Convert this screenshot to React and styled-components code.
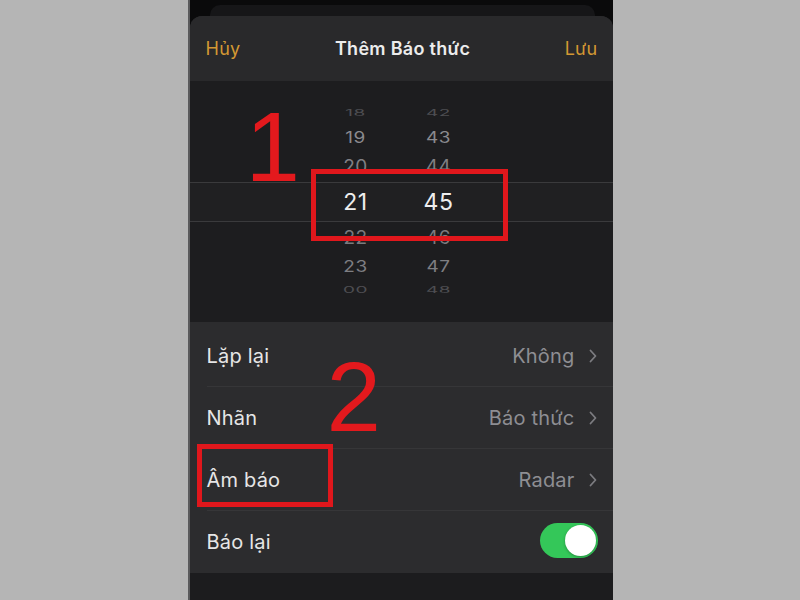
import React from "react";
import styled, { createGlobalStyle } from "styled-components";

const GlobalStyle = createGlobalStyle`
  html, body {
    margin: 0;
    padding: 0;
    background: #b5b5b5;
  }
  body {
    font-family: Inter, "Noto Sans", "Liberation Sans", sans-serif;
  }
`;

const hours = [
  { h: "18", m: "42", size: 22, scale: 0.45, color: "#4e4e52" },
  { h: "19", m: "43", size: 26, scale: 0.8, color: "#8a8a8e" },
  { h: "20", m: "44", size: 32, scale: 0.95, color: "#808084" },
  { h: "21", m: "45", size: 40, scale: 1, color: "#eeeeee", active: true },
  { h: "22", m: "46", size: 31, scale: 0.95, color: "#7a7a7e" },
  { h: "23", m: "47", size: 26, scale: 0.8, color: "#7e7e82" },
  { h: "00", m: "48", size: 22, scale: 0.45, color: "#4e4e52" },
];

const rows = [
  { label: "Lặp lại", value: "Không" },
  { label: "Nhãn", value: "Báo thức" },
  { label: "Âm báo", value: "Radar" },
];

const App = () => {
  return (
    <Page>
      <GlobalStyle />
      <Phone>
        <TopStrip>
          <BackCard />
        </TopStrip>
        <Sheet>
          <Header>
            <HeaderButton>Hủy</HeaderButton>
            <Title>Thêm Báo thức</Title>
            <HeaderButton>Lưu</HeaderButton>
          </Header>
          <Picker>
            {hours.map((r) => (
              <PickerRow key={r.h} $h={r.size} $active={r.active}>
                <span />
                <Num $color={r.color} $scale={r.scale} $active={r.active}>
                  {r.h}
                </Num>
                <span />
                <Num $color={r.color} $scale={r.scale} $active={r.active}>
                  {r.m}
                </Num>
              </PickerRow>
            ))}
          </Picker>
          <List>
            {rows.map((r) => (
              <Row key={r.label}>
                <Label>{r.label}</Label>
                <Value>
                  {r.value}
                  <Chevron viewBox="0 0 8 14">
                    <path
                      d="M1.5 1.5 L6.5 7 L1.5 12.5"
                      fill="none"
                      stroke="#7c7c80"
                      strokeWidth="1.8"
                      strokeLinecap="round"
                      strokeLinejoin="round"
                    />
                  </Chevron>
                </Value>
              </Row>
            ))}
            <Row $last>
              <Label>Báo lại</Label>
              <Toggle>
                <Knob />
              </Toggle>
            </Row>
          </List>
          <Bottom />
        </Sheet>
        <Mark $left={56} $top={89}>1</Mark>
        <Mark $left={137} $top={339}>2</Mark>
        <RedBox $left={121} $top={169} $w={197} $h={72} />
        <RedBox $left={7} $top={444} $w={136} $h={63} />
      </Phone>
    </Page>
  );
};

const Page = styled.div`
  width: 800px;
  height: 600px;
  display: flex;
  justify-content: center;
  overflow: hidden;
`;

const Phone = styled.div`
  position: relative;
  width: 425px;
  height: 600px;
  background: #0a0a0b;
  border-left: 2px solid #5a5a5c;
  box-sizing: border-box;
  display: flex;
  flex-direction: column;
`;

const TopStrip = styled.div`
  height: 16px;
  padding: 5px 18px 0 20px;
  box-sizing: border-box;
  display: flex;
`;

const BackCard = styled.div`
  flex: 1;
  background: #161618;
  border-radius: 10px 10px 0 0;
`;

const Sheet = styled.div`
  flex: 1;
  display: flex;
  flex-direction: column;
  background: #28282a;
  border-radius: 12px 12px 0 0;
  overflow: hidden;
`;

const Header = styled.div`
  height: 65px;
  display: flex;
  align-items: center;
  justify-content: space-between;
  padding: 0 15px 0 16px;
  background: #29292b;
`;

const HeaderButton = styled.span`
  color: #d39833;
  font-size: 18px;
  letter-spacing: 0.3px;
`;

const Title = styled.span`
  color: #ececec;
  font-size: 18px;
  font-weight: 600;
  letter-spacing: 0.3px;
`;

const Picker = styled.div`
  height: 241px;
  padding-top: 21px;
  box-sizing: border-box;
  background: #1d1d1f;
  display: flex;
  flex-direction: column;
`;

const PickerRow = styled.div`
  height: ${(p) => p.$h}px;
  flex-shrink: 0;
  display: grid;
  grid-template-columns: 134px 64px 19px 64px;
  align-items: center;
  box-sizing: border-box;
  ${(p) =>
    p.$active &&
    `
    border-top: 1px solid #3a3a3c;
    border-bottom: 1px solid #3a3a3c;
    background: #202022;
  `}
`;

const Num = styled.span`
  text-align: center;
  color: ${(p) => p.$color};
  font-size: ${(p) => (p.$active ? 23 : 19)}px;
  font-weight: 400;
  transform: scaleY(${(p) => p.$scale});
  letter-spacing: 0.5px;
`;

const List = styled.div`
  background: #2c2c2e;
  padding-top: 3px;
`;

const Row = styled.div`
  height: 62px;
  margin-left: 17px;
  padding-right: 16px;
  display: flex;
  align-items: center;
  justify-content: space-between;
  box-sizing: border-box;
  border-bottom: ${(p) => (p.$last ? "none" : "1px solid #363638")};
`;

const Label = styled.span`
  color: #e6e6e6;
  font-size: 20px;
  letter-spacing: 0.2px;
`;

const Value = styled.span`
  display: flex;
  align-items: center;
  gap: 14px;
  color: #8e8e93;
  font-size: 20px;
  letter-spacing: 0.2px;
`;

const Chevron = styled.svg`
  width: 8px;
  height: 14px;
`;

const Toggle = styled.div`
  width: 58px;
  height: 35px;
  border-radius: 18px;
  background: #34c759;
  display: flex;
  align-items: center;
  justify-content: flex-end;
  padding: 2px;
  box-sizing: border-box;
  margin-right: -1px;
  margin-top: -4px;
`;

const Knob = styled.div`
  width: 31px;
  height: 31px;
  border-radius: 50%;
  background: #ffffff;
  box-shadow: 0 1px 3px rgba(0, 0, 0, 0.3);
`;

const Bottom = styled.div`
  flex: 1;
  background: #1c1c1e;
`;

const Mark = styled.span`
  position: absolute;
  left: ${(p) => p.$left}px;
  top: ${(p) => p.$top}px;
  font-family: "Liberation Sans", Arial, sans-serif;
  font-size: 98px;
  line-height: 1.2;
  color: #e3191d;
`;

const RedBox = styled.div`
  position: absolute;
  left: ${(p) => p.$left}px;
  top: ${(p) => p.$top}px;
  width: ${(p) => p.$w}px;
  height: ${(p) => p.$h}px;
  border: 5px solid #e0171c;
  box-sizing: border-box;
`;

export default App;
